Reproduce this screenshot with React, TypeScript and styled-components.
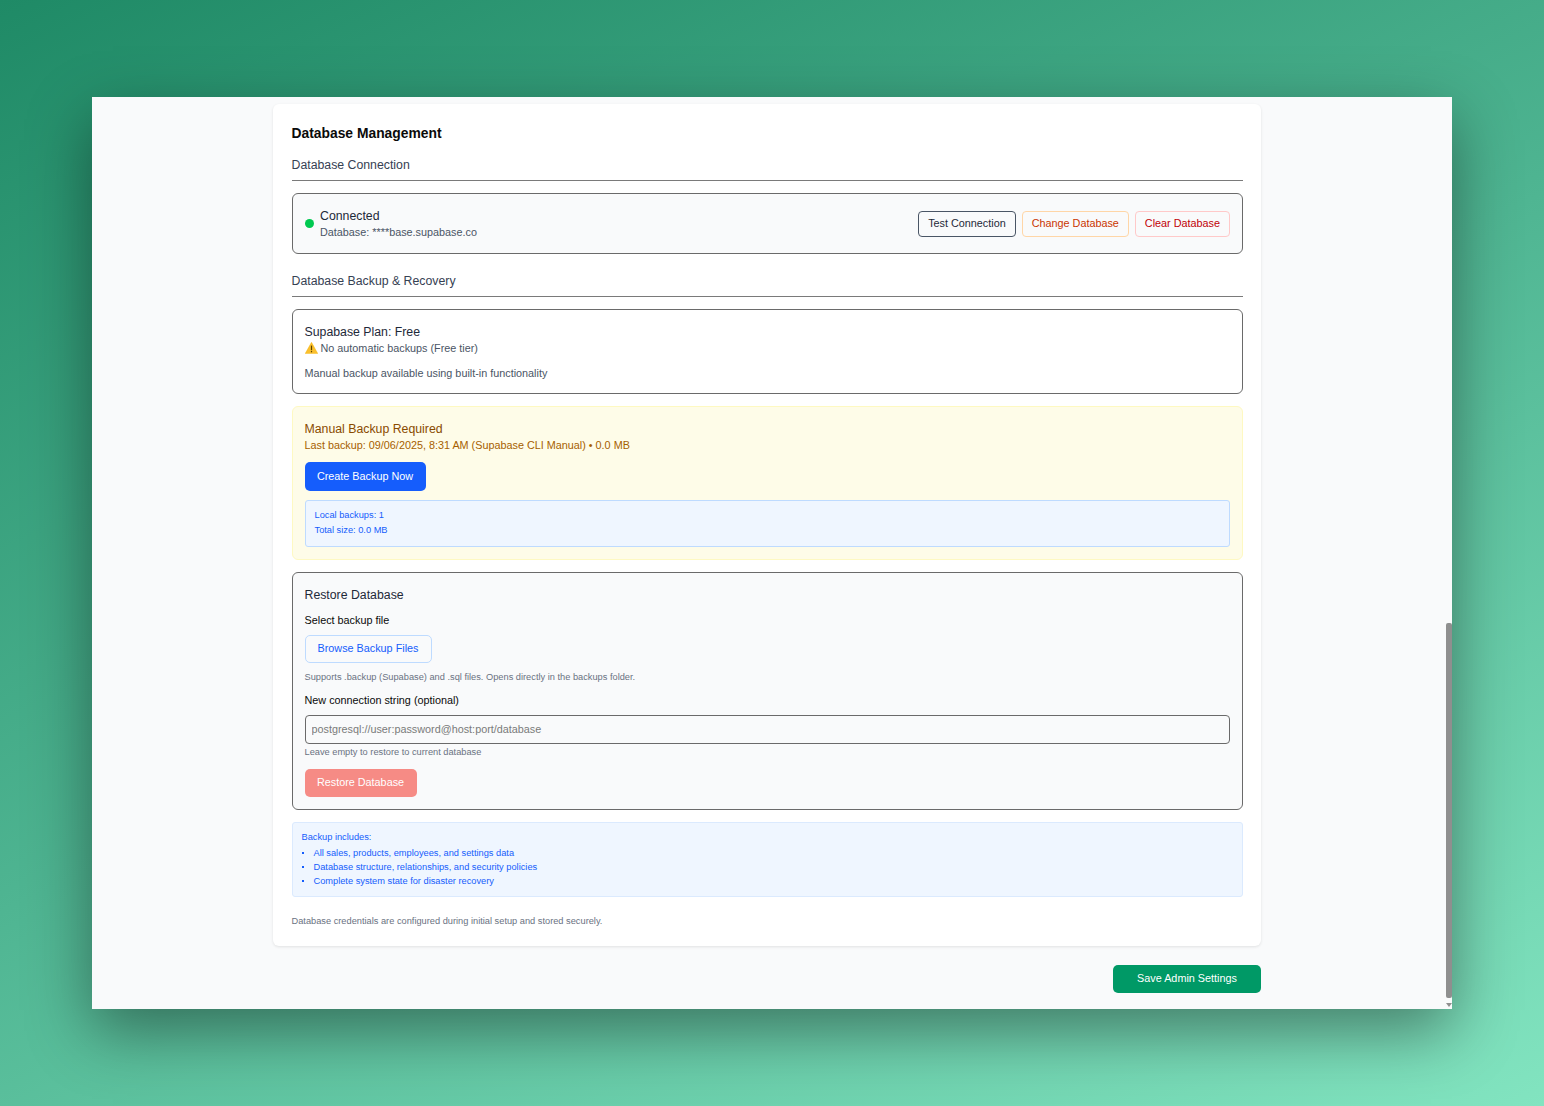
import React from 'react';
import styled, { createGlobalStyle } from 'styled-components';

const GlobalStyle = createGlobalStyle`
  html, body {
    margin: 0;
    padding: 0;
  }
  body {
    font-family: "Liberation Sans", Arial, sans-serif;
  }
  * {
    box-sizing: border-box;
  }
`;

const Backdrop = styled.div`
  width: 1544px;
  height: 1106px;
  padding: 97px 92px;
  overflow: hidden;
  background: linear-gradient(155deg, #1f8a66 0%, #4fb592 50%, #82e4c0 100%);
`;

const AppWindow = styled.div`
  position: relative;
  height: 912px;
  padding: 7px 191px 0 181px;
  overflow: hidden;
  background: #f9fafb;
  box-shadow: 0 22px 60px rgba(0, 0, 0, 0.42);
`;

const ScrollThumb = styled.div`
  position: absolute;
  top: 526px;
  right: 0;
  width: 6px;
  height: 375px;
  border-radius: 2px;
  background: #8f8f8f;
`;

const ScrollArrow = styled.div`
  position: absolute;
  right: 0;
  bottom: 2px;
  width: 0;
  height: 0;
  border-left: 3px solid transparent;
  border-right: 3px solid transparent;
  border-top: 4px solid #8f8f8f;
`;

const Card = styled.section`
  width: 988px;
  height: 842px;
  padding: 19px 18px 17px 18.5px;
  background: #fff;
  border-radius: 6px;
  box-shadow: 0 1px 3px rgba(0, 0, 0, 0.1);
`;

const Title = styled.h2`
  margin: 0 0 12px;
  font-size: 13.85px;
  line-height: 20px;
  font-weight: 700;
  color: #0a0a0a;
`;

const SectionHeading = styled.h3`
  margin: 0 0 12px;
  height: 26px;
  padding-bottom: 5px;
  border-bottom: 1px solid #7a7a7a;
  font-size: 12.3px;
  line-height: 20px;
  font-weight: 400;
  color: #364153;
`;

const Panel = styled.div<{ $tone?: 'plain' | 'muted' | 'warning' }>`
  margin-bottom: 12px;
  padding: 12px;
  border-radius: 6px;
  border: 1px solid ${(p) => (p.$tone === 'warning' ? '#fef9c2' : '#6a6a6a')};
  background: ${(p) =>
    p.$tone === 'warning' ? '#fefce8' : p.$tone === 'muted' ? '#f9fafb' : '#fff'};
`;

const ConnectionRow = styled(Panel)`
  display: flex;
  align-items: center;
  justify-content: space-between;
  height: 61px;
  margin-bottom: 17px;
`;

const Status = styled.div`
  display: flex;
  align-items: center;
  gap: 6.5px;
`;

const StatusText = styled.div`
  padding-bottom: 2px;
`;

const Dot = styled.span`
  width: 9px;
  height: 9px;
  border-radius: 50%;
  background: #00c950;
`;

const Strong = styled.div<{ $color?: string }>`
  font-size: 12.3px;
  line-height: 21px;
  margin-bottom: -3px;
  color: ${(p) => p.$color || '#1e2939'};
`;

const Sub = styled.div<{ $color?: string; $mt?: number }>`
  font-size: 10.82px;
  line-height: 16px;
  margin-top: ${(p) => p.$mt || 0}px;
  color: ${(p) => p.$color || '#4a5565'};
`;

const WarnLine = styled(Sub)`
  display: flex;
  align-items: center;
  gap: 3px;
`;

const Actions = styled.div`
  display: flex;
  gap: 6px;
`;

const OutlineButton = styled.button<{ $color: string; $border: string }>`
  height: 26px;
  padding: 0 9px 1px;
  border-radius: 4px;
  border: 1px solid ${(p) => p.$border};
  background: transparent;
  color: ${(p) => p.$color};
  font-family: inherit;
  font-size: 10.82px;
`;

const SolidButton = styled.button<{ $bg: string; $w: number; $h?: number; $mt?: number }>`
  display: block;
  width: ${(p) => p.$w}px;
  height: ${(p) => p.$h || 28}px;
  margin-top: ${(p) => p.$mt || 0}px;
  padding: 0 0 ${(p) => (p.$h ? 1 : 2)}px;
  border: none;
  border-radius: 5px;
  background: ${(p) => p.$bg};
  color: #fff;
  font-family: inherit;
  font-size: 10.82px;
`;

const BrowseButton = styled.button`
  display: block;
  width: 127px;
  height: 28px;
  margin-top: 7px;
  padding: 0 0 2px;
  border: 1px solid #bedbff;
  border-radius: 5px;
  background: transparent;
  color: #155dfc;
  font-family: inherit;
  font-size: 10.82px;
`;

const InnerNote = styled.div`
  margin-top: 9px;
  height: 47px;
  padding: 6.5px 9px;
  border: 1px solid #bedbff;
  border-radius: 3px;
  background: #eff6ff;
  color: #155dfc;
  font-size: 9.25px;
  line-height: 15.5px;
`;

const FieldLabel = styled.label<{ $mt: number }>`
  display: block;
  margin-top: ${(p) => p.$mt}px;
  font-size: 10.82px;
  line-height: 16px;
  color: #0a0a0a;
`;

const Hint = styled.div<{ $mt: number }>`
  margin-top: ${(p) => p.$mt}px;
  font-size: 9.25px;
  line-height: 14px;
  color: #6a7282;
`;

const ConnectionInput = styled.input`
  display: block;
  width: 100%;
  height: 29px;
  margin-top: 7px;
  padding: 0 6px 1px;
  border: 1px solid #6a6a6a;
  border-radius: 4px;
  background: transparent;
  font-family: inherit;
  font-size: 10.82px;
  &::placeholder {
    color: #7a7a7a;
    opacity: 1;
  }
`;

const IncludesBox = styled.div`
  height: 75px;
  padding: 7px 9px;
  border: 1px solid #dbeafe;
  border-radius: 3px;
  background: #eff6ff;
  color: #155dfc;
  font-size: 9.25px;
  line-height: 14px;
`;

const IncludesList = styled.ul`
  margin: 2px 0 0;
  padding: 0 0 0 12px;
  list-style: none;
  li {
    position: relative;
  }
  li::before {
    content: '';
    position: absolute;
    left: -12px;
    top: 6px;
    width: 2px;
    height: 2px;
    background: #155dfc;
  }
`;

const Footnote = styled.div`
  margin-top: 16px;
  font-size: 9.25px;
  line-height: 16px;
  color: #6a7282;
`;

const SaveRow = styled.div`
  display: flex;
  justify-content: flex-end;
  width: 988px;
  margin-top: 19px;
`;

const WarningIcon = () => (
  <svg width="13" height="12" viewBox="0 0 13 12">
    <path d="M6.5 0.3 L12.8 11.6 H0.2 Z" fill="#fbc02d" stroke="#f5b400" strokeWidth="0.4" strokeLinejoin="round" />
    <rect x="5.9" y="3.6" width="1.2" height="4.6" fill="#5a4300" />
    <rect x="5.9" y="9" width="1.2" height="1.3" fill="#5a4300" />
  </svg>
);

const App = () => (
  <>
    <GlobalStyle />
    <Backdrop>
      <AppWindow>
        <Card>
          <Title>Database Management</Title>
          <SectionHeading>Database Connection</SectionHeading>
          <ConnectionRow $tone="muted">
            <Status>
              <Dot />
              <StatusText>
                <Strong>Connected</Strong>
                <Sub>Database: ****base.supabase.co</Sub>
              </StatusText>
            </Status>
            <Actions>
              <OutlineButton $color="#1e2939" $border="#4a5565">Test Connection</OutlineButton>
              <OutlineButton $color="#ca3500" $border="#ffd6a7">Change Database</OutlineButton>
              <OutlineButton $color="#c10007" $border="#ffc9c9">Clear Database</OutlineButton>
            </Actions>
          </ConnectionRow>

          <SectionHeading>Database Backup &amp; Recovery</SectionHeading>
          <Panel>
            <Strong>Supabase Plan: Free</Strong>
            <WarnLine>
              <WarningIcon />
              No automatic backups (Free tier)
            </WarnLine>
            <Sub $mt={9}>Manual backup available using built-in functionality</Sub>
          </Panel>

          <Panel $tone="warning">
            <Strong $color="#894b00">Manual Backup Required</Strong>
            <Sub $color="#a65f00">Last backup: 09/06/2025, 8:31 AM (Supabase CLI Manual) • 0.0 MB</Sub>
            <SolidButton $bg="#155dfc" $w={121} $h={29} $mt={9}>Create Backup Now</SolidButton>
            <InnerNote>
              Local backups: 1
              <br />
              Total size: 0.0 MB
            </InnerNote>
          </Panel>

          <Panel $tone="muted">
            <Strong>Restore Database</Strong>
            <FieldLabel $mt={9}>Select backup file</FieldLabel>
            <BrowseButton>Browse Backup Files</BrowseButton>
            <Hint $mt={7}>Supports .backup (Supabase) and .sql files. Opens directly in the backups folder.</Hint>
            <FieldLabel $mt={8}>New connection string (optional)</FieldLabel>
            <ConnectionInput placeholder="postgresql://user:password@host:port/database" />
            <Hint $mt={1}>Leave empty to restore to current database</Hint>
            <SolidButton $bg="#f68b85" $w={112} $mt={10}>Restore Database</SolidButton>
          </Panel>

          <IncludesBox>
            Backup includes:
            <IncludesList>
              <li>All sales, products, employees, and settings data</li>
              <li>Database structure, relationships, and security policies</li>
              <li>Complete system state for disaster recovery</li>
            </IncludesList>
          </IncludesBox>
          <Footnote>Database credentials are configured during initial setup and stored securely.</Footnote>
        </Card>
        <SaveRow>
          <SolidButton $bg="#009966" $w={148}>Save Admin Settings</SolidButton>
        </SaveRow>
        <ScrollThumb />
        <ScrollArrow />
      </AppWindow>
    </Backdrop>
  </>
);

export default App;
